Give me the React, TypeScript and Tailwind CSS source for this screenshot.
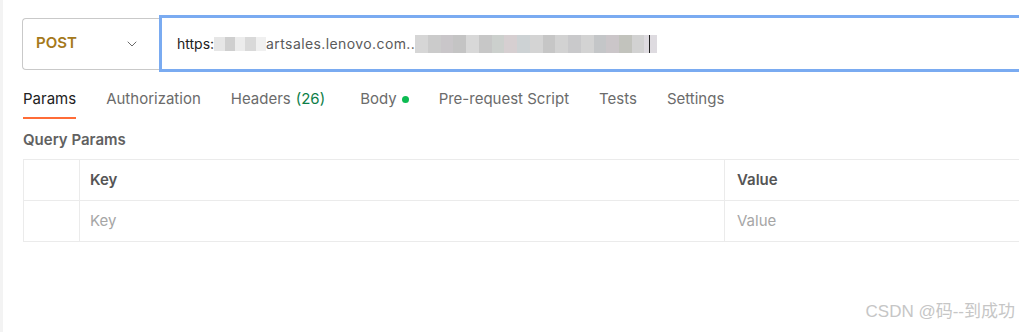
import { ChevronDown } from 'lucide-react';

const blurA = ['#e6e6e6', '#cfcfcf', '#ececec', '#d9d9d9', '#f0f0f0'];
const blurB = [
  '#d6d6d6', '#cbcbcb', '#c9c6c9', '#c4c4c4', '#d8d8d8', '#c7c7c7', '#ccd0cd', '#d6cfd1',
  '#cdd2d4', '#d4d4d4', '#c6c6c6', '#d2d2d2', '#c9c9cb', '#d3d3d3', '#c4c6c8', '#cbc6c9',
  '#c2c3bd', '#d2d2d2', '#dedbe0',
];

const tabs = [
  { label: 'Params', active: true },
  { label: 'Authorization' },
  { label: 'Headers', count: '(26)' },
  { label: 'Body', dot: true },
  { label: 'Pre-request Script' },
  { label: 'Tests' },
  { label: 'Settings' },
];

export default function App() {
  return (
    <div className="relative w-[1019px] h-[332px] overflow-hidden bg-white border-l-[3px] border-[#f3f3f3] font-['Inter','Noto_Sans',sans-serif]">
      <div className="pl-[19px] pt-[15px]">
        {/* Request bar */}
        <div className="flex items-center">
          <div className="flex items-center justify-between w-[137px] h-[52px] border border-[#c9c9c9] border-r-0 rounded-l-[4px] pl-[13px] pr-[19px]">
            <span className="text-[15px] font-semibold text-[#a5791b]">POST</span>
            <ChevronDown className="w-[16px] h-[16px] text-[#6b6b6b]" strokeWidth={1.5} />
          </div>
          <div className="flex items-center flex-1 h-[57px] border-[3px] border-[#7aabf1] pl-[15px] text-[14px] text-[#212121] -mr-[6px]">
            <span>https:</span>
            <span className="flex h-[14px] w-[52px]">
              {blurA.map((c, i) => (
                <span key={i} className="flex-1 h-full" style={{ background: c }} />
              ))}
            </span>
            <span className="text-[#5a5a5a] tracking-[0.4px]">artsales.lenovo.com..</span>
            <span className="flex h-[18px] w-[242px]">
              {blurB.map((c, i) => (
                <span key={i} className="flex-1 h-full" style={{ background: c }} />
              ))}
            </span>
            <span className="w-px h-[18px] bg-[#222] -ml-[8px]" />
          </div>
        </div>

        {/* Tabs */}
        <div className="flex items-start h-[59px] pt-[18px] pl-[1px] text-[15px] text-[#6b6b6b]">
          {tabs.map((t, i) => (
            <div key={t.label} className={`flex flex-col ${i === 2 ? 'mr-[35px]' : 'mr-[30px]'}`}>
              <div className={`flex items-center gap-[5px] leading-[18px] ${t.active ? 'text-[#212121]' : ''}`}>
                <span>{t.label}</span>
                {t.count && <span className="text-[#0d7e48]">{t.count}</span>}
                {t.dot && <span className="w-[7px] h-[7px] rounded-full bg-[#0cbb52]" />}
              </div>
              {t.active && <div className="h-[2px] mt-[9px] bg-[#ff6c37]" />}
            </div>
          ))}
        </div>

        {/* Query params */}
        <div className="text-[15px] font-semibold text-[#616161] leading-[18px] pl-[1px]">Query Params</div>
        <div className="mt-[10px] ml-[1px] w-[1100px] border border-[#ebebeb] text-[15px]">
          <div className="flex h-[41px] border-b border-[#ebebeb]">
            <div className="w-[56px] border-r border-[#ebebeb]" />
            <div className="w-[645px] border-r border-[#ebebeb] flex items-center pl-[10px] font-semibold text-[#555]">Key</div>
            <div className="flex-1 flex items-center pl-[12px] font-semibold text-[#555]">Value</div>
          </div>
          <div className="flex h-[40px]">
            <div className="w-[56px] border-r border-[#ebebeb]" />
            <div className="w-[645px] border-r border-[#ebebeb] flex items-center pl-[10px] text-[#a6a6a6]">Key</div>
            <div className="flex-1 flex items-center pl-[12px] text-[#a6a6a6]">Value</div>
          </div>
        </div>
      </div>

      {/* watermark */}
      <div className="absolute right-[4px] bottom-[8px] text-[17px] text-[#c6c6c6] font-['Liberation_Sans','Noto_Sans_CJK_SC',sans-serif]">
        CSDN @码--到成功
      </div>
    </div>
  );
}
